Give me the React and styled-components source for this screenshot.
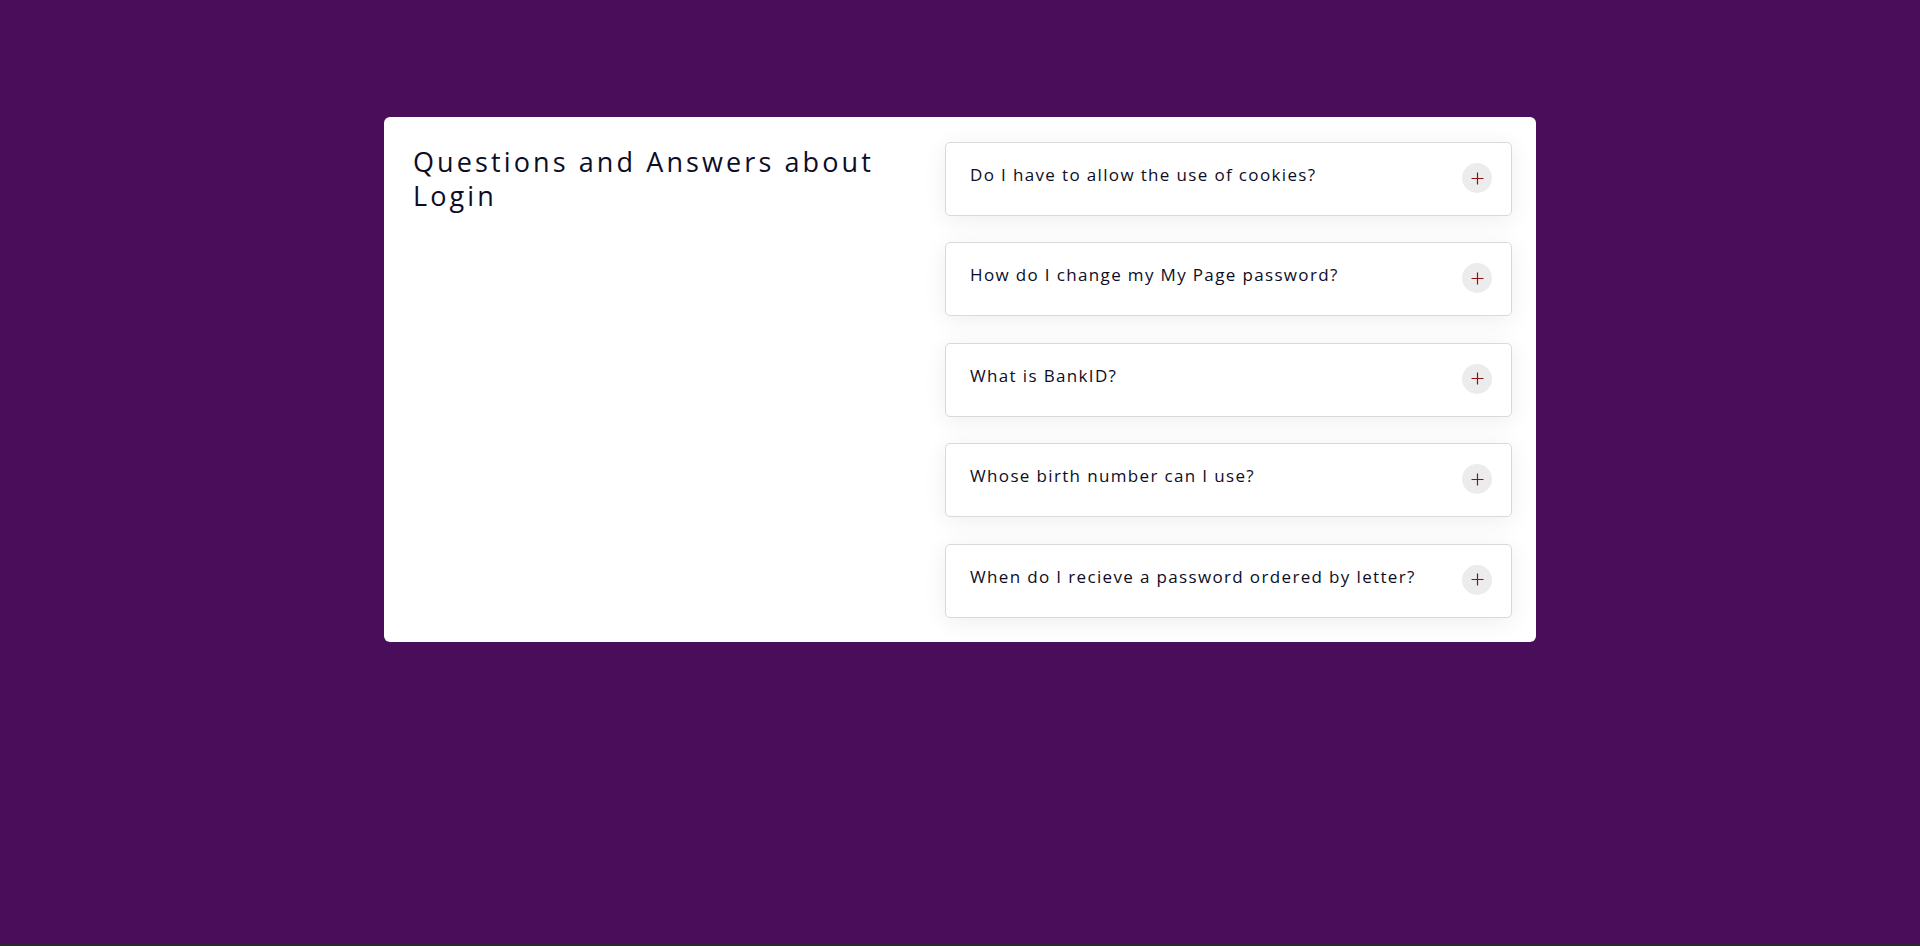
import React from "react";
import styled, { createGlobalStyle } from "styled-components";

const GlobalStyle = createGlobalStyle`
  html, body {
    margin: 0;
    padding: 0;
    background-color: #4a0d5a;
  }

  body {
    font-family: "Open Sans", "Lato", Arial, sans-serif;
    color: #0d0d26;
  }
`;

const Page = styled.div`
  min-height: 100vh;
  box-sizing: border-box;
  padding-top: 117px;
  border-bottom: 3px solid #2c2830;
`;

const Card = styled.section`
  width: 1152px;
  margin: 0 auto;
  box-sizing: border-box;
  background-color: #ffffff;
  border-radius: 6px;
  padding: 25px 24px 24px 29px;
  display: grid;
  grid-template-columns: 1fr 567px;
  column-gap: 32px;
  align-items: start;
`;

const Heading = styled.h2`
  margin: 0;
  padding-top: 3px;
  font-size: 27px;
  line-height: 34px;
  font-weight: 400;
  letter-spacing: 3.1px;
  color: #0d0d26;
  max-width: 490px;
`;

const List = styled.div`
  display: flex;
  flex-direction: column;
  gap: 26.4px;
`;

const Item = styled.div`
  box-sizing: border-box;
  height: 74px;
  display: flex;
  align-items: flex-start;
  justify-content: space-between;
  padding: 20px 19px 20px 24px;
  border: 1px solid #d9d9d9;
  border-radius: 5px;
  background-color: #ffffff;
  box-shadow: 0 4px 24px rgba(0, 0, 0, 0.07);
`;

const Question = styled.span`
  font-size: 17px;
  line-height: 24px;
  letter-spacing: 1.35px;
  color: #0d0d26;
`;

const ToggleButton = styled.button`
  flex: none;
  width: 30px;
  height: 30px;
  border: none;
  border-radius: 50%;
  background-color: #ececec;
  color: #8b1212;
  display: flex;
  align-items: center;
  justify-content: center;
  padding: 0;
  cursor: pointer;
`;

const questions = [
  "Do I have to allow the use of cookies?",
  "How do I change my My Page password?",
  "What is BankID?",
  "Whose birth number can I use?",
  "When do I recieve a password ordered by letter?",
];

function PlusIcon() {
  return (
    <svg width="13" height="13" viewBox="0 0 13 13" fill="none">
      <path d="M6.5 0.5v12M0.5 6.5h12" stroke="currentColor" strokeWidth="1.2" />
    </svg>
  );
}

export default function App() {
  return (
    <>
      <GlobalStyle />
      <Page>
        <Card>
          <Heading>Questions and Answers about Login</Heading>
          <List>
            {questions.map((q) => (
              <Item key={q}>
                <Question>{q}</Question>
                <ToggleButton aria-label="Expand">
                  <PlusIcon />
                </ToggleButton>
              </Item>
            ))}
          </List>
        </Card>
      </Page>
    </>
  );
}
